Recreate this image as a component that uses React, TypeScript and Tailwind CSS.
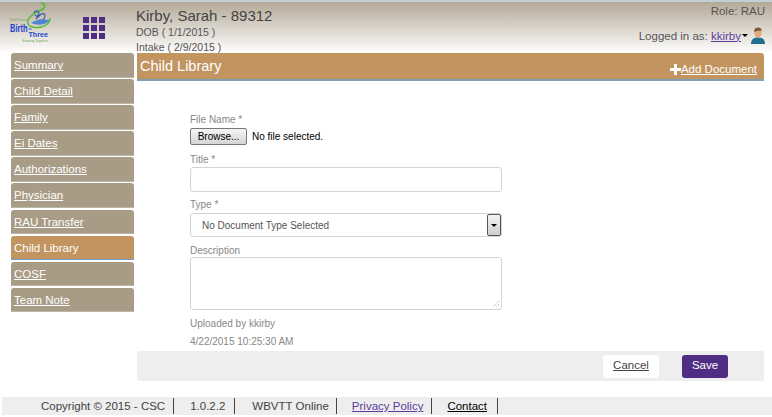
import React from 'react';

const NAV_ITEMS = [
  'Summary',
  'Child Detail',
  'Family',
  'Ei Dates',
  'Authorizations',
  'Physician',
  'RAU Transfer',
  'Child Library',
  'COSF',
  'Team Note',
];

const Logo = () => (
  <svg width="50" height="41" viewBox="9 2 50 41" className="shrink-0 overflow-hidden">
    <path d="M41 3 C46 4 46 8 41 10 C33 14 26 18 28 24 C30 28 40 29 46 25 C49 23 50 20 50 18" fill="none" stroke="#4fbf2f" strokeWidth="1.5" />
    <path d="M34 13 C35 10 38 10 39 13 C39 16 36 17 35 15 M36 19 L40 15 C42 13 45 13 45 16 C45 19 42 21 39 20" fill="none" stroke="#2f55b0" strokeWidth="1.1" />
    <path d="M31 23 C36 19 44 19 50 20 C46 25 38 26 31 23Z" fill="#4f86d2" />
    <text x="10" y="21" fontSize="3.5" fill="#6fa85a" fontFamily="Liberation Sans, sans-serif">Red Rivers</text>
    <text x="10" y="31.5" fontSize="10" fontWeight="700" fill="#1f45d0" fontFamily="Liberation Sans, sans-serif" textLength="17.5" lengthAdjust="spacingAndGlyphs">Birth</text>
    <text x="28.5" y="30" fontSize="3" fontWeight="700" fill="#1f45d0" fontFamily="Liberation Sans, sans-serif">to</text>
    <text x="28.5" y="37" fontSize="6.5" fontWeight="700" fill="#1f45d0" fontFamily="Liberation Sans, sans-serif" textLength="19.5" lengthAdjust="spacingAndGlyphs">Three</text>
    <text x="22" y="41.5" fontSize="3" fill="#5f9f45" fontFamily="Liberation Sans, sans-serif" textLength="26">Growing Together</text>
  </svg>
);

const AppGrid = () => (
  <div className="grid grid-cols-3 gap-[2px] w-[22px] shrink-0 ml-[24px] mt-[15px]">
    {Array.from({ length: 9 }).map((_, i) => (
      <div key={i} className="w-[6px] h-[6px] bg-[#4f2d85]" />
    ))}
  </div>
);

const UserIcon = () => (
  <svg width="14" height="17" viewBox="0 0 14 17">
    <path d="M0 17 C0 12 3 10.5 7 10.5 C11 10.5 14 12 14 17Z" fill="#1f6f8f" />
    <ellipse cx="7" cy="6" rx="3.6" ry="4.6" fill="#e2ab7f" />
    <path d="M3.2 5 C3 1.5 5 0.5 7.2 0.5 C9.5 0.5 10.8 2 10.6 4 C9 3.5 6 3.5 3.2 5Z" fill="#7a5a3a" />
  </svg>
);

const PlusIcon = () => (
  <svg width="11" height="11" viewBox="0 0 11 11" className="shrink-0 mb-[1px]">
    <path d="M4 0h3v4h4v3H7v4H4V7H0V4h4z" fill="#fff" />
  </svg>
);

const fieldBorder = 'border border-[#d4d4d4] rounded-[3px] bg-white';

const App: React.FC = () => {
  return (
    <div className="w-[772px] h-[417px] overflow-hidden bg-white font-['Liberation_Sans',Arial,sans-serif] text-[#555]">
      <header className="h-[53px] border-t-2 border-[#c3cdd8] bg-gradient-to-b from-[#b3a998] to-white flex">
        <div className="w-[136px] flex items-start pl-[9px] shrink-0">
          <Logo />
          <AppGrid />
        </div>
        <div className="flex-1 pt-[4px] leading-none">
          <div className="text-[15px] text-[#444] leading-[19px]">Kirby, Sarah - 89312</div>
          <div className="text-[10.5px] leading-[15px]">DOB ( 1/1/2015 )</div>
          <div className="text-[10.5px] leading-[15px]">Intake ( 2/9/2015 )</div>
        </div>
        <div className="w-[200px] pr-[7px] text-right text-[11.5px]">
          <div className="mt-[2px] leading-[14px]">Role: RAU</div>
          <div className="mt-[9px] flex items-center justify-end leading-[14px]">
            <span>Logged in as:&nbsp;</span>
            <a className="underline text-[#5b3a9b]">kkirby</a>
            <span className="ml-[1px] mr-[3px] w-0 h-0 border-x-[3px] border-x-transparent border-t-[3px] border-t-black" />
            <UserIcon />
          </div>
        </div>
      </header>

      <div className="flex">
        <nav className="w-[137px] pl-[11px] pr-[3px] flex flex-col gap-[1.6px] shrink-0">
          {NAV_ITEMS.map((item) => {
            const active = item === 'Child Library';
            return (
              <a
                key={item}
                className={`h-[24.5px] pl-[3px] leading-[25px] text-[11.5px] rounded-t-[3px] ${
                  active
                    ? 'bg-[#c2945f] text-white border-b border-[#6f9fc8]'
                    : 'bg-[#a89c86] text-white underline border-b border-[#bdb5a5]'
                }`}
              >
                {item}
              </a>
            );
          })}
        </nav>

        <main className="w-[627px]">
          <div className="h-[28px] bg-[#c2945f] border-b-2 border-[#7f9db5] rounded-tr-[3px] flex items-center justify-between pl-[3px] pr-[7px] text-white">
            <span className="text-[14.5px] mt-[2px]">Child Library</span>
            <span className="flex items-center text-[11.5px] mt-[8px]">
              <PlusIcon />
              <span className="underline">Add Document</span>
            </span>
          </div>

          <form className="pl-[53px] pt-[33px] h-[270px] text-[10px] text-[#888]">
            <div className="leading-[12px]">File Name *</div>
            <div className="flex items-center mt-[2px] text-black">
              <button
                type="button"
                className="w-[57px] h-[17px] border border-[#777] rounded-[2px] bg-gradient-to-b from-[#f5f5f5] to-[#d5d5d5] text-[10px] leading-none"
              >
                Browse...
              </button>
              <span className="ml-[5px]">No file selected.</span>
            </div>

            <div className="mt-[9px] leading-[12px]">Title *</div>
            <div className={`mt-[1px] w-[312px] h-[25px] ${fieldBorder}`} />

            <div className="mt-[7px] leading-[12px]">Type *</div>
            <div className={`mt-[2px] w-[312px] h-[24px] flex items-center justify-between ${fieldBorder}`}>
              <span className="pl-[11px] text-[#555]">No Document Type Selected</span>
              <span className="w-[14px] h-[22px] border border-[#555] rounded-[2px] bg-gradient-to-b from-[#f5f5f5] to-[#cfcfcf] flex items-center justify-center">
                <span className="w-0 h-0 border-x-[3px] border-x-transparent border-t-[3px] border-t-black" />
              </span>
            </div>

            <div className="mt-[8px] leading-[12px]">Description</div>
            <div className={`w-[312px] h-[53px] relative ${fieldBorder}`}>
              <svg width="8" height="8" viewBox="0 0 8 8" className="absolute right-[1px] bottom-[1px]">
                <path d="M7 1 L1 7 M7 4 L4 7" stroke="#aaa" strokeWidth="1" strokeDasharray="1 1" />
              </svg>
            </div>

            <div className="mt-[8px] leading-[12px]">Uploaded by kkirby</div>
            <div className="mt-[6px] leading-[12px]">4/22/2015 10:25:30 AM</div>
          </form>

          <div className="h-[30px] bg-[#eeeeee] rounded-[2px] flex items-center justify-end pr-[36px] gap-[23px] text-[11.5px]">
            <a className="w-[56px] h-[23px] bg-white rounded-[3px] flex items-center justify-center underline text-[#444]">Cancel</a>
            <button type="button" className="w-[46px] h-[23px] bg-[#4f2d85] rounded-[3px] text-white">Save</button>
          </div>
        </main>
      </div>

      <footer className="mt-[16px] ml-[2px] h-[18px] bg-[#eeeeee] flex items-center text-[11.5px] text-[#444]">
        <span className="pl-[39px] pr-[8px] border-r border-[#444] leading-[16px]">Copyright © 2015 - CSC</span>
        <span className="pl-[16px] pr-[9px] border-r border-[#444] leading-[16px]">1.0.2.2</span>
        <span className="pl-[17px] pr-[7px] border-r border-[#444] leading-[16px]">WBVTT Online</span>
        <a className="pl-[15px] pr-[8px] border-r border-[#444] leading-[16px] underline text-[#5b3a9b]">Privacy Policy</a>
        <a className="pl-[15px] pr-[10px] border-r border-[#444] leading-[16px] underline text-black">Contact</a>
      </footer>
    </div>
  );
};

export default App;
